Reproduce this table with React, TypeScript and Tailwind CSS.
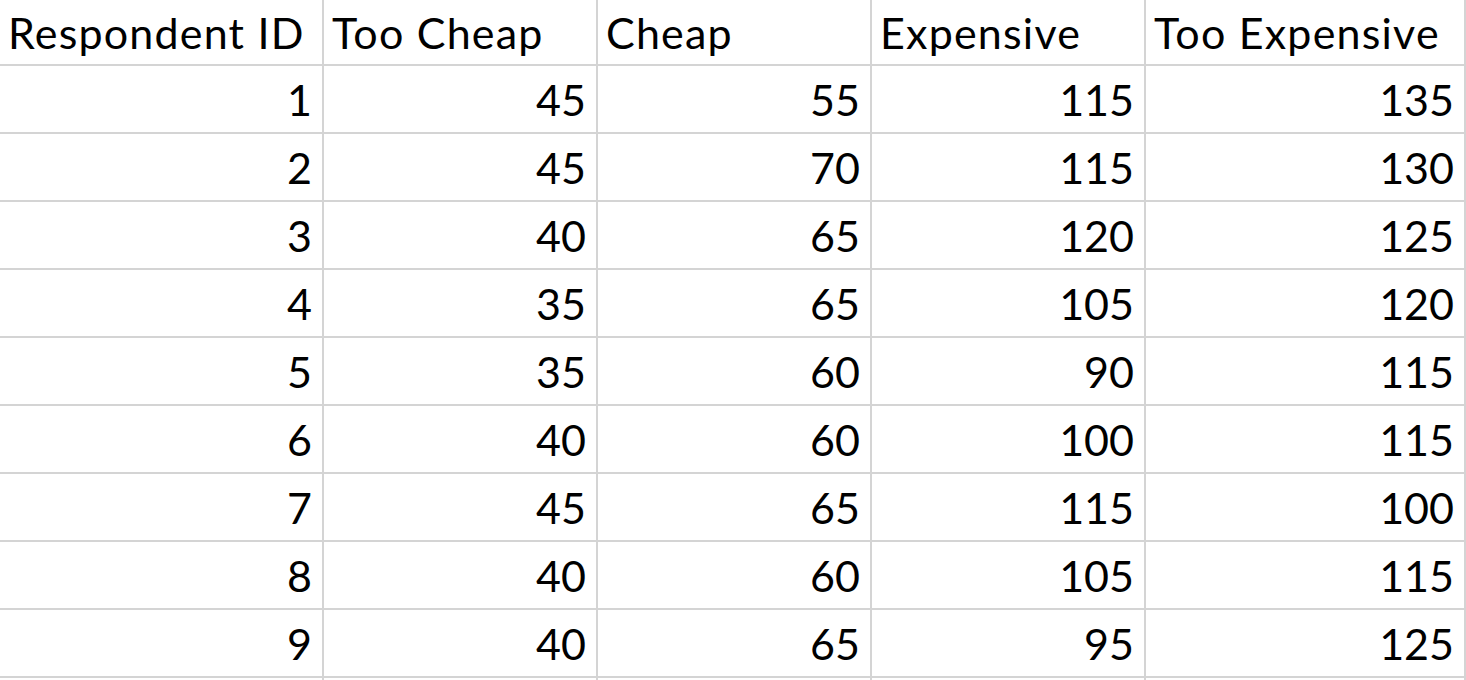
const headers = ["Respondent ID", "Too Cheap", "Cheap", "Expensive", "Too Expensive"];

const rows = [
  [1, 45, 55, 115, 135],
  [2, 45, 70, 115, 130],
  [3, 40, 65, 120, 125],
  [4, 35, 65, 105, 120],
  [5, 35, 60, 90, 115],
  [6, 40, 60, 100, 115],
  [7, 45, 65, 115, 100],
  [8, 40, 60, 105, 115],
  [9, 40, 65, 95, 125],
];

const cell = "flex items-end border-r-2 border-b-2 border-[#d4d4d4] leading-none";

export default function App() {
  return (
    <div className="h-[680px] w-[1466px] overflow-hidden bg-white text-[43px] text-black [font-family:Lato,'Open_Sans',sans-serif]">
      <div className="grid grid-cols-[324px_274px_274px_274px_320px]">
        {headers.map((h) => (
          <div key={h} className={`${cell} h-[66px] whitespace-nowrap pb-[10px] pl-[8px] tracking-[1.2px]`}>
            {h}
          </div>
        ))}
        {rows.map((r) =>
          r.map((v, i) => (
            <div key={`${r[0]}-${i}`} className={`${cell} h-[68px] justify-end pb-[11px] pr-[10px]`}>
              {v}
            </div>
          ))
        )}
        {headers.map((h) => (
          <div key={`empty-${h}`} className={`${cell} h-[68px]`} />
        ))}
      </div>
    </div>
  );
}
